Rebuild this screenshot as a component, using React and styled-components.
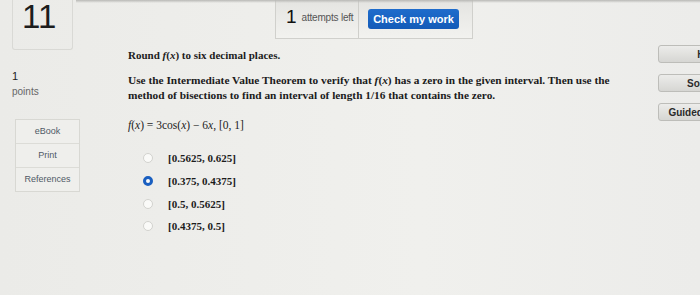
import React from "react";
import styled, { createGlobalStyle } from "styled-components";

const GlobalStyle = createGlobalStyle`
  html, body {
    margin: 0;
    padding: 0;
    width: 700px;
    height: 295px;
    overflow: hidden;
    background: #ededea;
  }
`;

const Page = styled.div`
  display: flex;
  width: 700px;
  height: 295px;
  overflow: hidden;
  background: linear-gradient(90deg, #ebebe8 0%, #f0f0ed 60%, #ececea 100%);
  font-family: "Liberation Sans", Arial, sans-serif;
  position: relative;
  &::before {
    content: "";
    position: absolute;
    left: 76px;
    right: 0;
    top: 0;
    height: 3px;
    background: linear-gradient(180deg, #b9b9b6, rgba(200, 200, 196, 0));
  }
`;

const LeftColumn = styled.div`
  width: 128px;
  flex: none;
  display: flex;
  flex-direction: column;
`;

const NumberBox = styled.div`
  margin-left: 12px;
  width: 61px;
  height: 50px;
  border: 1px solid #d9d9d5;
  border-top: none;
  border-radius: 0 0 3px 3px;
  box-sizing: border-box;
  font-family: "Liberation Sans", Arial, sans-serif;
  font-size: 33px;
  font-weight: 400;
  color: #1d1d1d;
  line-height: 34px;
  padding: 0 0 0 9px;
  transform-origin: left top;
`;

const Points = styled.div`
  margin: 20px 0 0 12px;
  color: #222;
  font-size: 11px;
  line-height: 12px;
  span {
    display: block;
    color: #666;
    font-size: 10px;
    margin-top: 4px;
  }
`;

const Resources = styled.div`
  margin: 21px 0 0 15px;
  width: 63px;
  border: 1px solid #d8d8d3;
  background: #efefec;
`;

const ResourceLink = styled.div`
  height: 23px;
  line-height: 23px;
  text-align: center;
  font-size: 9px;
  color: #4f5a66;
  & + & {
    border-top: 1px solid #dcdcd7;
  }
`;

const Center = styled.div`
  flex: 1;
  display: flex;
  flex-direction: column;
  min-width: 0;
`;

const Toolbar = styled.div`
  margin-left: 147px;
  width: 198px;
  height: 39px;
  display: flex;
  border: 1px solid #d0d0cc;
  border-top: none;
  box-sizing: border-box;
  background: linear-gradient(180deg, #e4e4e1 0%, #f2f2ef 100%);
`;

const Attempts = styled.div`
  width: 83px;
  display: flex;
  align-items: center;
  padding: 0 0 4px 10px;
  box-sizing: border-box;
  border-right: 1px solid #cfcfcb;
  color: #222;
  font-size: 10px;
  b {
    font-size: 19px;
    font-weight: 400;
    margin-right: 5px;
    color: #111;
  }
  span {
    color: #555;
    letter-spacing: -0.2px;
  }
`;

const CheckButton = styled.button`
  margin: 9px 0 0 9px;
  width: 91px;
  height: 20px;
  border: none;
  border-radius: 3px;
  background: linear-gradient(180deg, #1e6ccc 0%, #135bb8 100%);
  color: #fff;
  font-family: "Liberation Sans", Arial, sans-serif;
  font-weight: 700;
  font-size: 11px;
  padding: 0;
`;

const Question = styled.div`
  font-family: "Liberation Serif", "Times New Roman", serif;
  font-weight: 700;
  font-size: 11px;
  color: #1c1c1c;
  i {
    font-style: italic;
    font-weight: 700;
  }
`;

const Line = styled.p`
  margin: ${(p) => p.$top || 0}px 0 0 0;
  line-height: ${(p) => p.$lh || 14}px;
  font-size: ${(p) => p.$size || 11}px;
`;

const Formula = styled.p`
  margin: 15px 0 0 0;
  line-height: 14px;
  font-weight: 400;
  font-size: 11.5px;
  i {
    font-weight: 400;
  }
`;

const Options = styled.div`
  margin: 15px 0 0 15px;
  display: flex;
  flex-direction: column;
`;

const Option = styled.label`
  height: 22.7px;
  display: flex;
  align-items: center;
  gap: 15px;
`;

const Radio = styled.span`
  width: 10px;
  height: 10px;
  border-radius: 50%;
  box-sizing: border-box;
  flex: none;
  border: ${(p) => (p.$on ? "3px solid #1a5fc0" : "1px solid #d2d2ce")};
  background: #fafaf8;
`;

const RightColumn = styled.div`
  width: 42px;
  flex: none;
  padding-top: 45px;
  display: flex;
  flex-direction: column;
  gap: 11px;
`;

const SideButton = styled.div`
  width: 98px;
  height: 18px;
  line-height: 17px;
  box-sizing: border-box;
  text-align: center;
  border: 1px solid #bdbdb9;
  border-radius: 3px;
  background: linear-gradient(180deg, #ececea 0%, #d6d6d3 100%);
  font-size: 10px;
  font-weight: 700;
  color: #2a2a2a;
`;

const choices = [
  "[0.5625, 0.625]",
  "[0.375, 0.4375]",
  "[0.5, 0.5625]",
  "[0.4375, 0.5]",
];

export default function App() {
  return (
    <>
      <GlobalStyle />
      <Page>
        <LeftColumn>
          <NumberBox>11</NumberBox>
          <Points>
            1<span>points</span>
          </Points>
          <Resources>
            <ResourceLink>eBook</ResourceLink>
            <ResourceLink>Print</ResourceLink>
            <ResourceLink>References</ResourceLink>
          </Resources>
        </LeftColumn>
        <Center>
          <Toolbar>
            <Attempts>
              <b>1</b>
              <span>attempts left</span>
            </Attempts>
            <CheckButton>Check my work</CheckButton>
          </Toolbar>
          <Question>
            <Line $top={9}>
              Round <i>f</i>(<i>x</i>) to six decimal places.
            </Line>
            <Line $top={11} $lh={15} $size={11.35}>
              Use the Intermediate Value Theorem to verify that <i>f</i>(<i>x</i>) has a zero in the given interval. Then use the
              <br />
              method of bisections to find an interval of length 1/16 that contains the zero.
            </Line>
            <Formula>
              <i>f</i>(<i>x</i>) = 3cos(<i>x</i>) − 6<i>x</i>, [0, 1]
            </Formula>
            <Options>
              {choices.map((c, i) => (
                <Option key={c}>
                  <Radio $on={i === 1} />
                  {c}
                </Option>
              ))}
            </Options>
          </Question>
        </Center>
        <RightColumn>
          <SideButton>Hint</SideButton>
          <SideButton>Solution</SideButton>
          <SideButton>Guided Solution</SideButton>
        </RightColumn>
      </Page>
    </>
  );
}
